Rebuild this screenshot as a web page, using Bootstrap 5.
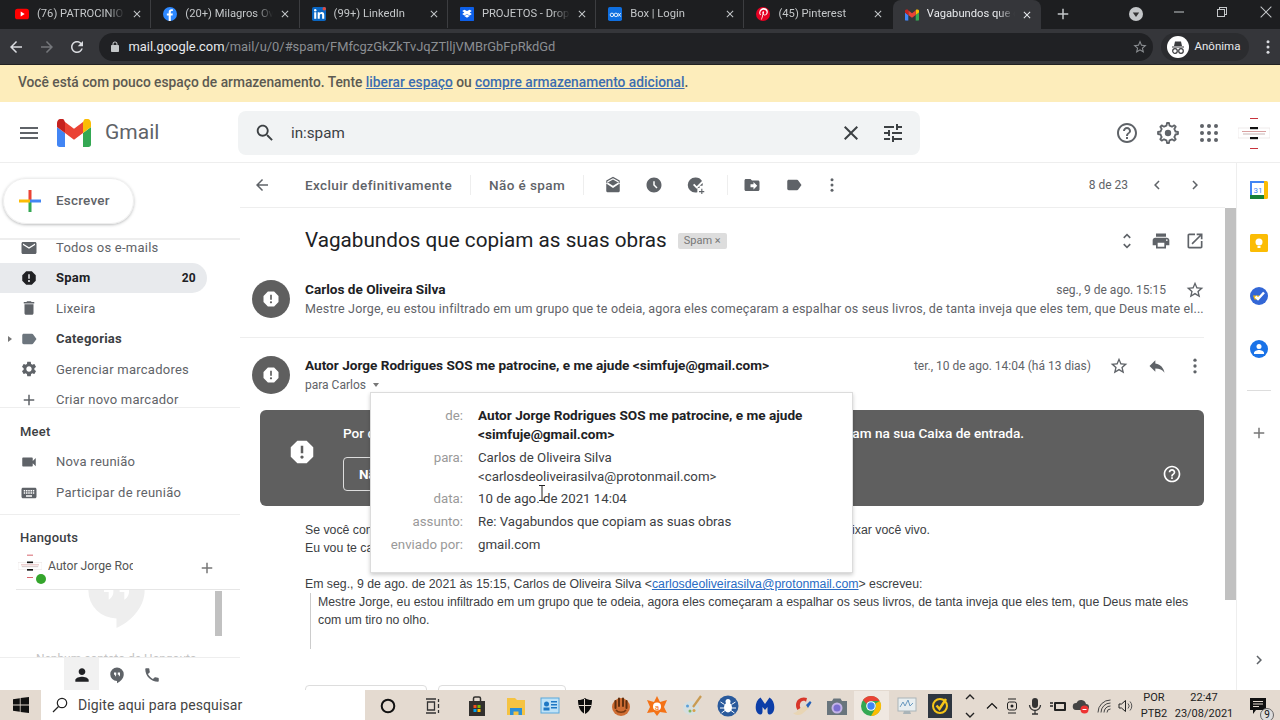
<!DOCTYPE html>
<html lang="pt-BR">
<head>
    <meta charset="UTF-8">
    <meta name="viewport" content="width=device-width, initial-scale=1.0">
    <title>Vagabundos que copiam as suas obras - Gmail</title>
    <link href="https://cdn.jsdelivr.net/npm/bootstrap@5.3.0/dist/css/bootstrap.min.css" rel="stylesheet">
    <style>
        html, body { height: 720px; overflow: hidden; }
        body { font-family: Roboto, "Liberation Sans", sans-serif; font-size: 13px; color: #5f6368; background: #fff; }
        svg { display: block; flex: none; }
        .ic { fill: currentColor; }
        .s12 { width: 12px; height: 12px; } .s14 { width: 14px; height: 14px; } .s16 { width: 16px; height: 16px; }
        .s18 { width: 18px; height: 18px; } .s20 { width: 20px; height: 20px; } .s22 { width: 22px; height: 22px; }
        .s24 { width: 24px; height: 24px; } .s30 { width: 30px; height: 30px; }

        /* chrome */
        .tabstrip { height: 29px; background: #1d1e20; color: #c4c7c9; font-size: 11.2px; padding-bottom: 1px; }
        .tabx { width: 148.3px; height: 28px; padding: 0 6px 0 12px; border-right: 1px solid #3c3d40; }
        .tabx:first-child { margin-left: 3px; }
        .tabx.no-sep { border-right-color: transparent; }
        .tabx.on { background: #35363a; color: #e8eaed; border-radius: 8px 8px 0 0; border: 0; height: 29px; margin-bottom: -1px; }
        .tab-fav { width: 14px; height: 14px; margin-right: 8px; }
        .tab-title { width: 88px; overflow: hidden; white-space: nowrap; mask-image: linear-gradient(90deg, #000 80%, transparent); }
        .tab-x { margin-left: 6px; color: #c4c7c9; }
        .tabx.on .tab-x { color: #e8eaed; }
        .new-tab { margin-left: 13px; }
        .win-min { margin-left: 30px; margin-top: -5px; }
        .win-max { margin-left: 31px; margin-top: -5px; }
        .win-cls { margin-left: 32px; margin-right: 8px; margin-top: -5px; }
        .urlbar { height: 36px; background: #35363a; color: #dadce0; border-bottom: 1px solid #222; padding: 4px 0 3px; }
        .nav-ic { width: 30.5px; } .nav-ic.first { margin-left: 1px; }
        .nav-dim { color: #75777b; }
        .omni { width: 1054px; margin-left: 6px; background: #202124; border-radius: 15px; padding: 0 5px 0 10px; font-size: 12.9px; color: #8b8e92; }
        .omni b { font-weight: 400; color: #e8eaed; }
        .omni-lock { margin-right: 8px; color: #c4c7c9; }
        .incog { width: 88px; margin-left: 8px; background: #2b2c2f; border-radius: 15px; padding-left: 6px; color: #e8eaed; font-size: 11.5px; gap: 6px; }
        .dots-end { margin-left: 10px; color: #dadce0; }

        /* banner + header */
        .low-space { height: 37px; background: #fdedbb; padding: 0 0 2px 18px; font-size: 13.75px; font-weight: 500; color: #5c5a52; }
        .low-space a { color: #3c6db0; }
        .gm-head { height: 61px; border-bottom: 1px solid #eee; padding-top: 2px; }
        .menu-btn { width: 57px; padding-left: 17px; }
        .gm-name { width: 147px; padding-left: 14px; font-size: 21px; color: #5f6368; }
        .gm-search { width: 682px; height: 44px; background: #f1f3f4; border-radius: 8px; padding: 0 15px 0 16px; font-size: 15.2px; color: #3c4043; }
        .gm-search .q { flex: 1; padding-left: 15px; }
        .search-x { margin-right: 18px; }
        .head-tools { margin-left: auto; gap: 17px; padding-right: 10px; }
        .head-tools .ic { width: 24px; height: 24px; }
        .acct { width: 32px; height: 32px; }

        /* sidebar */
        .gm-body { height: 527px; }
        .side { width: 240px; }
        .compose-wrap { height: 75px; padding: 15px 0 0 3px; }
        .compose-btn { width: 131px; height: 46px; border-radius: 23px; border: 1px solid #eee; box-shadow: 0 1px 3px rgba(60,64,67,.35); padding: 0 0 1px 14px; gap: 14px; font-size: 13.5px; font-weight: 500; letter-spacing: .2px; color: #5f6368; }
        .side-list { height: 170px; overflow: hidden; border-top: 2px solid #eee; border-bottom: 1px solid #eee; }
        .side-list-in { margin-top: -7.5px; }
        .side-row { height: 30.4px; width: 207px; padding-left: 20px; border-radius: 0 15px 15px 0; gap: 18px; letter-spacing: .25px; position: relative; }
        .side-row.on { background: #e8eaed; color: #202124; font-weight: 700; }
        .side-row.strong { color: #3c4043; font-weight: 700; }
        .row-count { margin-left: auto; padding-right: 11px; font-size: 12px; }
        .side-tri { position: absolute; left: 8px; top: 12px; border-left: 4px solid #777; border-top: 3.5px solid transparent; border-bottom: 3.5px solid transparent; }
        .side-title { height: 31px; padding-left: 20px; color: #3c4043; font-weight: 500; letter-spacing: .2px; }
        .meet-box { height: 107px; border-bottom: 1px solid #eee; padding-top: 8px; }
        .hang-head { height: 44px; padding-top: 7px; }
        .hang-contact { height: 31px; border-bottom: 1px solid #e6e6e6; margin-left: 16px; padding-left: 2px; font-size: 12.2px; position: relative; color: #555; }
        .hang-ava { margin-top: -5px; }
        .hang-name { width: 85px; height: 20px; line-height: 20px; overflow: hidden; white-space: nowrap; margin-left: 6px; margin-top: -3px; }
        .green-dot { position: absolute; left: 20px; top: 15px; width: 10px; height: 10px; border-radius: 50%; background: #34a52c; }
        .hang-plus { margin-left: 65px; color: #777; }
        .hang-empty { height: 67px; overflow: hidden; position: relative; color: #eee; text-align: center; font-size: 12px; }
        .hang-bubble { margin: -34px 0 0 78.5px; width: 75px; height: 75px; }
        .hang-none { position: absolute; left: 0; width: 232px; top: 60px; color: #c4c4c4; }
        .hang-thumb { position: absolute; left: 215px; top: 1px; width: 7px; height: 45px; background: #c1c1c1; }
        .hang-foot { height: 33px; border-top: 1px solid #eee; padding-left: 64px; color: #5f6368; }
        .hang-tab { width: 35px; height: 33px; }
        .hang-tab.on { background: #f1f1f1; color: #202124; }

        /* main column */
        .mainpane { width: 985px; }
        .toolbar { height: 45px; border-bottom: 1px solid #eee; position: relative; font-size: 13.5px; font-weight: 500; letter-spacing: .4px; }
        .tb-back { width: 65px; padding-left: 13px; }
        .tb-sep { width: 1px; height: 20px; background: #eee; }
        .tb-sep-two { margin-left: 10px; }
        .tb-txt { margin: 0 18px; white-space: nowrap; }
        .tb-first { margin-left: 0; }
        .tb-ico { width: 41.5px; }
        .tb-pages { margin-left: auto; padding-right: 21px; font-size: 12px; font-weight: 400; letter-spacing: 0; gap: 20px; }
        .scroll-area { height: 482px; position: relative; overflow: hidden; }
        .msg-pane { width: 985px; padding: 0 21px 0 12px; }
        .subj-row { height: 64px; padding: 1px 0 0 53px; }
        .subj-txt { font-size: 20.7px; color: #202124; }
        .spam-chip { margin-left: 11px; height: 16px; background: #ddd; border-radius: 2px; padding: 0 6px; font-size: 11px; color: #777; line-height: 16px; }
        .subj-tools { margin-left: auto; gap: 14px; margin-right: -1px; }
        .msg-row { height: 66px; border-bottom: 1px solid #eee; padding: 8px 0 0 12px; margin-left: -12px; }
        .avatar-mail { width: 38px; height: 38px; border-radius: 50%; background: #5f5f5f; color: #fff; margin-right: 15px; flex: none; }
        .mail-meta { flex: 1; min-width: 0; }
        .mail-from { color: #202124; font-weight: 700; font-size: 13.6px; line-height: 19px; }
        .mail-snip { font-size: 12.5px; line-height: 19px; margin-top: -1px; white-space: nowrap; letter-spacing: .165px; }
        .mail-date { font-size: 12px; line-height: 19px; }
        .date-one { gap: 19px; margin-right: -1px; }
        .top-line { display: flex; justify-content: space-between; }
        .msg-two { height: 72px; padding-top: 18px; }
        .para-line { font-size: 12px; line-height: 19px; }
        .para-tri { display: inline-block; margin-left: 4px; vertical-align: 2px; border-top: 4px solid #777; border-left: 3.5px solid transparent; border-right: 3.5px solid transparent; }
        .msg-tools { gap: 18px; margin: 0 -1px 0 18px; }
        .spam-warn { margin-left: 8px; height: 96px; background: #5f5f5f; border-radius: 6px; color: #fff; font-weight: 500; position: relative; padding: 14px 0 0 83px; font-size: 13.6px; }
        .warn-ico { position: absolute; left: 27px; top: 27px; }
        .warn-line { width: 681px; display: flex; justify-content: space-between; line-height: 19px; }
        .warn-btn { margin-top: 14px; width: 110px; height: 34px; border: 1px solid #ddd; border-radius: 4px; font-weight: 700; line-height: 32px; padding-left: 15px; }
        .warn-help { position: absolute; right: 22px; top: 54px; }
        .plain-mail { padding: 15px 0 0 53px; font-family: "Liberation Sans", Arial, sans-serif; font-size: 12.3px; line-height: 18px; color: #3c4043; }
        .line-split { width: 625px; display: flex; justify-content: space-between; }
        .plain-gap { height: 18px; }
        .plain-mail a { color: #2a6cc4; }
        .quote-box { margin-left: 5px; padding-left: 7px; border-left: 1px solid #ccc; height: 56px; width: 882px; }
        .reply-stubs { margin: 36px 0 0 53px; gap: 11px; }
        .reply-stub { height: 28px; border: 1px solid #ddd; border-radius: 4px; }
        .stub-a { width: 122px; } .stub-b { width: 128px; }

        /* popup on top of message */
        .mail-pop { position: absolute; left: 130px; top: 184px; width: 483px; height: 181px; background: #fff; border: 1px solid #dcdcdc; box-shadow: 0 2px 4px rgba(0,0,0,.2); padding: 13px 20px 0 0; display: grid; grid-template-columns: 92px 1fr; column-gap: 15px; row-gap: 3.7px; align-content: start; font-size: 13.25px; line-height: 19px; color: #3c4043; }
        .pop-lab { text-align: right; color: #999; }
        .pop-val { color: #3c4043; }
        .pop-val.bold { color: #202124; font-size: 13.6px; font-weight: 700; }
        .ibeam { position: absolute; left: 167px; top: 92px; width: 8px; height: 16px; }

        .v-scroll { width: 11px; }
        .toolbar-blank { height: 45px; }
        .v-thumb { height: 392px; background: #c1c1c1; }
        .rail { width: 44px; border-left: 1px solid #eee; position: relative; }
        .rail-top { height: 227px; padding-top: 18px; gap: 35px; }
        .rail-top svg { width: 18px; height: 18px; }
        .rail-line { width: 24px; height: 1px; background: #ddd; margin: 0 auto; }
        .rail-plus { margin-top: 33px; color: #777; }
        .rail-next { margin-top: 209px; color: #5f6368; }

        /* taskbar */
        .taskbar { height: 30px; background: #e4dad0; color: #111; }
        .win-btn { width: 41px; }
        .task-search { width: 324px; background: #fff; padding-left: 11px; gap: 10px; font-size: 14px; color: #444; letter-spacing: .1px; }
        .task-grid { flex: 1; display: grid; height: 30px; align-items: center; justify-items: center; grid-template-columns: 46.5px 43.5px 43px 36px 32.5px 36px 36px 36px 35.5px 36.5px 37px 36px 34px 35px 36px 31.5px 28px 16.5px 22.5px 23px 23px 23.5px 22.5px 21px 36px 64px 44px; }
        .task-cell { display: flex; align-items: center; justify-content: center; width: 100%; height: 30px; }
        .task-cell.open { background: #efe8e1; }
        .lang-box, .clock-box { font-size: 11px; line-height: 16px; text-align: center; color: #222; }
        .task-chev { gap: 6px; font-size: 0; }
        .notif-wrap { position: relative; }
        .notif-n { position: absolute; left: 11px; top: 11px; width: 14px; height: 14px; border-radius: 50%; background: #ddd; border: 1px solid #666; font-size: 10px; line-height: 12px; text-align: center; color: #111; }
    </style>
</head>
<body class="d-flex flex-column">

<svg class="d-none">
    <symbol id="i-menu" viewBox="0 0 24 24"><path d="M3 18h18v-2H3v2zm0-5h18v-2H3v2zm0-7v2h18V6H3z"/></symbol>
    <symbol id="i-search" viewBox="0 0 24 24"><path d="M15.5 14h-.79l-.28-.27C15.41 12.59 16 11.11 16 9.5 16 5.91 13.09 3 9.5 3S3 5.91 3 9.5 5.91 16 9.5 16c1.61 0 3.09-.59 4.23-1.57l.27.28v.79l5 4.99L20.49 19l-4.99-5zm-6 0C7.01 14 5 11.99 5 9.5S7.01 5 9.5 5 14 7.01 14 9.5 11.99 14 9.5 14z"/></symbol>
    <symbol id="i-close" viewBox="0 0 24 24"><path d="M19 6.41L17.59 5 12 10.59 6.41 5 5 6.41 10.59 12 5 17.59 6.41 19 12 13.41 17.59 19 19 17.59 13.41 12z"/></symbol>
    <symbol id="i-tune" viewBox="0 0 24 24"><path d="M3 17v2h6v-2H3zM3 5v2h10V5H3zm10 16v-2h8v-2h-8v-2h-2v6h2zM7 9v2H3v2h4v2h2V9H7zm14 4v-2H11v2h10zm-6-4h2V7h4V5h-4V3h-2v6z"/></symbol>
    <symbol id="i-help" viewBox="0 0 24 24"><path d="M11 18h2v-2h-2v2zm1-16C6.48 2 2 6.48 2 12s4.48 10 10 10 10-4.48 10-10S17.52 2 12 2zm0 18c-4.41 0-8-3.59-8-8s3.59-8 8-8 8 3.59 8 8-3.59 8-8 8zm0-14c-2.21 0-4 1.79-4 4h2c0-1.1.9-2 2-2s2 .9 2 2c0 2-3 1.75-3 5h2c0-2.25 3-2.5 3-5 0-2.21-1.79-4-4-4z"/></symbol>
    <symbol id="i-gear" viewBox="0 0 24 24"><path d="M19.14 12.94c.04-.3.06-.61.06-.94 0-.32-.02-.64-.07-.94l2.03-1.58c.18-.14.23-.41.12-.61l-1.92-3.32c-.12-.22-.37-.29-.59-.22l-2.39.96c-.5-.38-1.03-.7-1.62-.94l-.36-2.54c-.04-.24-.24-.41-.48-.41h-3.84c-.24 0-.43.17-.47.41l-.36 2.54c-.59.24-1.13.57-1.62.94l-2.39-.96c-.22-.08-.47 0-.59.22L2.74 8.87c-.12.21-.08.47.12.61l2.03 1.58c-.05.3-.09.63-.09.94s.02.64.07.94l-2.03 1.58c-.18.14-.23.41-.12.61l1.92 3.32c.12.22.37.29.59.22l2.39-.96c.5.38 1.03.7 1.62.94l.36 2.54c.05.24.24.41.48.41h3.84c.24 0 .44-.17.47-.41l.36-2.54c.59-.24 1.13-.56 1.62-.94l2.39.96c.22.08.47 0 .59-.22l1.92-3.32c.12-.22.07-.47-.12-.61l-2.01-1.58zM12 15.6c-1.98 0-3.6-1.62-3.6-3.6s1.62-3.6 3.6-3.6 3.6 1.62 3.6 3.6-1.62 3.6-3.6 3.6z"/></symbol>
    <symbol id="i-gear-o" viewBox="0 0 24 24"><path d="M13 2h-2l-.5 2.600a8 8 0 00-2.500 1.100L5.700 4.400 4.300 5.800 5.700 8a8 8 0 00-1.100 2.500L2 11v2l2.600.5a8 8 0 001.100 2.500l-1.400 2.300 1.400 1.400L8 18.300a8 8 0 002.500 1.100L11 22h2l.5-2.600a8 8 0 002.500-1.100l2.300 1.400 1.400-1.400-1.400-2.300a8 8 0 001.100-2.500L22 13v-2l-2.600-.5a8 8 0 00-1.100-2.500l1.400-2.300-1.400-1.400L16 5.700a8 8 0 00-2.500-1.100z" fill="none" stroke="currentColor" stroke-width="1.800" stroke-linejoin="round"/><circle cx="12" cy="12" r="3.200"/></symbol>
    <symbol id="i-apps" viewBox="0 0 24 24"><circle cx="5" cy="5" r="2"/><circle cx="12" cy="5" r="2"/><circle cx="19" cy="5" r="2"/><circle cx="5" cy="12" r="2"/><circle cx="12" cy="12" r="2"/><circle cx="19" cy="12" r="2"/><circle cx="5" cy="19" r="2"/><circle cx="12" cy="19" r="2"/><circle cx="19" cy="19" r="2"/></symbol>
    <symbol id="i-back" viewBox="0 0 24 24"><path d="M20 11H7.830l5.590-5.590L12 4l-8 8 8 8 1.410-1.410L7.830 13H20v-2z"/></symbol>
    <symbol id="i-fwd" viewBox="0 0 24 24"><path d="M4 13h12.170l-5.590 5.590L12 20l8-8-8-8-1.410 1.410L16.170 11H4v2z"/></symbol>
    <symbol id="i-reload" viewBox="0 0 24 24"><path d="M17.65 6.35C16.2 4.9 14.21 4 12 4c-4.42 0-7.99 3.58-7.99 8s3.57 8 7.99 8c3.73 0 6.84-2.55 7.73-6h-2.08c-.82 2.33-3.04 4-5.65 4-3.31 0-6-2.69-6-6s2.69-6 6-6c1.66 0 3.14.69 4.22 1.78L13 11h7V4l-2.35 2.35z"/></symbol>
    <symbol id="i-star" viewBox="0 0 24 24"><path d="M22 9.24l-7.19-.62L12 2 9.19 8.63 2 9.24l5.46 4.73L5.820 21 12 17.27 18.18 21l-1.63-7.03L22 9.24zM12 15.4l-3.76 2.27 1-4.28-3.32-2.88 4.38-.38L12 6.100l1.71 4.04 4.38.38-3.32 2.88 1 4.28L12 15.4z"/></symbol>
    <symbol id="i-lock" viewBox="0 0 24 24"><path d="M18 8h-1V6c0-2.76-2.24-5-5-5S7 3.24 7 6v2H6c-1.100 0-2 .9-2 2v10c0 1.100.9 2 2 2h12c1.100 0 2-.9 2-2V10c0-1.100-.9-2-2-2zM9 6c0-1.660 1.340-3 3-3s3 1.340 3 3v2H9V6z"/></symbol>
    <symbol id="i-mail" viewBox="0 0 24 24"><path d="M20 4H4c-1.100 0-2 .9-2 2v12c0 1.100.9 2 2 2h16c1.100 0 2-.9 2-2V6c0-1.100-.9-2-2-2zm0 4l-8 5-8-5V6l8 5 8-5v2z"/></symbol>
    <symbol id="i-report" viewBox="0 0 24 24"><path d="M15.730 3H8.270L3 8.270v7.460L8.270 21h7.460L21 15.730V8.270L15.730 3zM12 17.300c-.72 0-1.300-.58-1.300-1.300 0-.72.58-1.300 1.300-1.300.72 0 1.300.58 1.300 1.300 0 .72-.58 1.300-1.300 1.300zm1-4.300h-2V7h2v6z"/></symbol>
    <symbol id="i-trash" viewBox="0 0 24 24"><path d="M6 19c0 1.100.9 2 2 2h8c1.100 0 2-.9 2-2V7H6v12zM19 4h-3.500l-1-1h-5l-1 1H5v2h14V4z"/></symbol>
    <symbol id="i-label" viewBox="0 0 24 24"><path d="M17.630 5.840C17.270 5.330 16.670 5 16 5L5 5.010C3.900 5.010 3 5.900 3 7v10c0 1.100.9 1.990 2 1.990L16 19c.67 0 1.270-.33 1.630-.84L22 12l-4.370-6.160z"/></symbol>
    <symbol id="i-add" viewBox="0 0 24 24"><path d="M19 13h-6v6h-2v-6H5v-2h6V5h2v6h6v2z"/></symbol>
    <symbol id="i-video" viewBox="0 0 24 24"><path d="M17 10.500V7c0-.55-.45-1-1-1H4c-.55 0-1 .45-1 1v10c0 .55.45 1 1 1h12c.55 0 1-.45 1-1v-3.500l4 4v-11l-4 4z"/></symbol>
    <symbol id="i-keys" viewBox="0 0 24 24"><path d="M20 5H4c-1.100 0-1.990.9-1.990 2L2 17c0 1.100.9 2 2 2h16c1.100 0 2-.9 2-2V7c0-1.100-.9-2-2-2zm-9 3h2v2h-2V8zm0 3h2v2h-2v-2zM8 8h2v2H8V8zm0 3h2v2H8v-2zm-1 2H5v-2h2v2zm0-3H5V8h2v2zm9 7H8v-2h8v2zm0-4h-2v-2h2v2zm0-3h-2V8h2v2zm3 3h-2v-2h2v2zm0-3h-2V8h2v2z"/></symbol>
    <symbol id="i-person" viewBox="0 0 24 24"><path d="M12 12c2.210 0 4-1.790 4-4s-1.790-4-4-4-4 1.790-4 4 1.790 4 4 4zm0 2c-2.670 0-8 1.340-8 4v2h16v-2c0-2.660-5.330-4-8-4z"/></symbol>
    <symbol id="i-phone" viewBox="0 0 24 24"><path d="M6.620 10.790c1.440 2.830 3.760 5.140 6.590 6.590l2.200-2.200c.27-.27.67-.36 1.020-.24 1.120.37 2.330.57 3.570.57.55 0 1 .45 1 1V20c0 .55-.45 1-1 1-9.390 0-17-7.610-17-17 0-.55.45-1 1-1h3.500c.55 0 1 .45 1 1 0 1.250.2 2.450.57 3.570.11.35.03.74-.25 1.020l-2.200 2.200z"/></symbol>
    <symbol id="i-bubble" viewBox="0 0 24 24"><path fill-rule="evenodd" d="M12 2a9 9 0 00-9 9 9 9 0 009 9v3c4.500-2 9-6.500 9-12a9 9 0 00-9-9zM8 8.500h3v3c0 1.200-.8 2-1.500 2.500v-2.500H8zm5 0h3v3c0 1.200-.8 2-1.500 2.500v-2.500H13z"/></symbol>
    <symbol id="i-clock" viewBox="0 0 24 24"><path d="M11.990 2C6.470 2 2 6.480 2 12s4.470 10 9.990 10C17.520 22 22 17.520 22 12S17.520 2 11.990 2zm3.300 14.710L11 12.410V7h2v4.590l3.710 3.710-1.420 1.410z"/></symbol>
    <symbol id="i-print" viewBox="0 0 24 24"><path d="M19 8H5c-1.660 0-3 1.340-3 3v6h4v4h12v-4h4v-6c0-1.660-1.340-3-3-3zm-3 11H8v-5h8v5zm3-7c-.55 0-1-.45-1-1s.45-1 1-1 1 .45 1 1-.45 1-1 1zm-1-9H6v4h12V3z"/></symbol>
    <symbol id="i-open" viewBox="0 0 24 24"><path d="M19 19H5V5h7V3H5c-1.110 0-2 .9-2 2v14c0 1.100.89 2 2 2h14c1.100 0 2-.9 2-2v-7h-2v7zM14 3v2h3.590l-9.830 9.830 1.410 1.410L19 6.410V10h2V3h-7z"/></symbol>
    <symbol id="i-unfold" viewBox="0 0 24 24"><path d="M12 5.830L15.170 9l1.410-1.410L12 3 7.410 7.590 8.830 9 12 5.830zm0 12.340L8.830 15l-1.410 1.410L12 21l4.590-4.590L15.170 15 12 18.170z"/></symbol>
    <symbol id="i-reply" viewBox="0 0 24 24"><path d="M10 9V5l-7 7 7 7v-4.100c5 0 8.500 1.600 11 5.100-1-5-4-10-11-11z"/></symbol>
    <symbol id="i-more" viewBox="0 0 24 24"><circle cx="12" cy="5" r="2"/><circle cx="12" cy="12" r="2"/><circle cx="12" cy="19" r="2"/></symbol>
    <symbol id="i-prev" viewBox="0 0 24 24"><path d="M15.410 7.410L14 6l-6 6 6 6 1.410-1.410L10.830 12z"/></symbol>
    <symbol id="i-next" viewBox="0 0 24 24"><path d="M10 6L8.590 7.410 13.170 12l-4.580 4.590L10 18l6-6z"/></symbol>
    <symbol id="i-drafts" viewBox="0 0 24 24"><path fill-rule="evenodd" d="M12 1 3 6v3l1.500 1V7l7.500-4 7.500 4v3L21 9V6zM3 10v10a1.500 1.500 0 001.500 1.500h15A1.500 1.500 0 0021 20V10l-9 6zM5 8.500l7 4.500 7-4.500-7-3.800z"/></symbol>
    <symbol id="i-task" viewBox="0 0 24 24"><path d="M11 2a10 10 0 100 20c1 0 1.900-.1 2.800-.4V19h-.01c0-.1.010-.2.010-.3V16h3v-3h3.900c.2-.6.3-1.300.3-2l-.2-1.800-7.800 7.800-5-5 1.700-1.700 3.300 3.300 7-7A10 10 0 0011 2zm8 15v3h-3v1.500h3V24h1.500v-2.500H23V20h-2.500v-3H19z"/></symbol>
    <symbol id="i-move" viewBox="0 0 24 24"><path d="M20 6h-8l-2-2H4c-1.100 0-1.990.9-1.990 2L2 18c0 1.100.9 2 2 2h16c1.100 0 2-.9 2-2V8c0-1.100-.9-2-2-2zm-6 12v-3h-4v-4h4V8l5 5-5 5z"/></symbol>

    <symbol id="logo-account" viewBox="0 0 32 32"><rect x="0" y="11" width="32" height="10" fill="#fff" stroke="#e4dcdc" stroke-width=".6"/><rect x="12" y="1" width="8" height="1" fill="#c8323c"/><rect x="12" y="10" width="8" height="2.200" fill="#111"/><rect x="12" y="20" width="8" height="2.200" fill="#111"/><rect x="4" y="14" width="24" height="1" fill="#d9a0a0"/><rect x="5" y="16.500" width="22" height="1" fill="#c9b6b6"/><rect x="12" y="31" width="8" height="1" fill="#c8323c"/></symbol>
    <symbol id="logo-m" viewBox="0 0 34 28"><path fill="#4285f4" d="M0 25.500C0 27 1 28 2.500 28H8V14L0 8z"/><path fill="#34a853" d="M26 28h5.500c1.500 0 2.500-1 2.500-2.500V8l-8 6z"/><path fill="#fbbc04" d="M26 3v11l8-6V4c0-3.500-4-5.500-6.800-3.400z"/><path fill="#ea4335" d="M8 14V3l9 6.700L26 3v11l-9 6.700z"/><path fill="#c5221f" d="M0 4v4l8 6V3L6.800.6C4-1.500 0 .5 0 4z"/></symbol>
</svg>

<div class="tabstrip d-flex align-items-center">
    <div class="tabx d-flex align-items-center">
        <svg class="tab-fav" viewBox="0 0 16 16"><rect y="2" width="16" height="12" rx="3" fill="#f00"/><path d="M6.500 5.200v5.600L11 8z" fill="#fff"/></svg>
        <span class="tab-title">(76) PATROCINIO DO</span>
        <svg class="ic s12 tab-x"><use href="#i-close"/></svg>
    </div>
    <div class="tabx d-flex align-items-center">
        <svg class="tab-fav" viewBox="0 0 16 16"><circle cx="8" cy="8" r="8" fill="#2d88ff"/><path d="M8.900 16V9.700h2l.35-2.400H8.900V5.900c0-.7.3-1.200 1.300-1.200h1.100V2.600C11 2.500 10.300 2.500 9.700 2.500 7.800 2.500 6.500 3.600 6.500 5.700v1.600H4.400v2.400h2.100V16z" fill="#fff"/></svg>
        <span class="tab-title">(20+) Milagros Ovando</span>
        <svg class="ic s12 tab-x"><use href="#i-close"/></svg>
    </div>
    <div class="tabx d-flex align-items-center">
        <svg class="tab-fav" viewBox="0 0 16 16"><rect width="16" height="16" rx="2" fill="#0a66c2"/><rect x="2.500" y="6" width="2.400" height="7.500" fill="#fff"/><circle cx="3.700" cy="3.800" r="1.400" fill="#fff"/><path d="M6.500 6h2.300v1.100C9.300 6.300 10.100 5.800 11.200 5.800c2 0 2.800 1.300 2.800 3.300v4.400h-2.400V9.500c0-1-.4-1.600-1.200-1.600-.9 0-1.500.6-1.500 1.700v3.900H6.500z" fill="#fff"/><circle cx="14" cy="2" r="2" fill="#e34b3f"/></svg>
        <span class="tab-title">(99+) LinkedIn</span>
        <svg class="ic s12 tab-x"><use href="#i-close"/></svg>
    </div>
    <div class="tabx d-flex align-items-center">
        <svg class="tab-fav" viewBox="0 0 16 16"><rect width="16" height="16" rx="1" fill="#0d5fe8"/><path d="M5 3 2.500 4.700 5 6.300 2.500 8 5 9.600 8 7.900 11 9.600 13.500 8 11 6.300 13.500 4.700 11 3 8 4.700zM8 8.500 5 10.200 8 12.200 11 10.200z" fill="#fff"/></svg>
        <span class="tab-title">PROJETOS - Dropbox</span>
        <svg class="ic s12 tab-x"><use href="#i-close"/></svg>
    </div>
    <div class="tabx d-flex align-items-center">
        <svg class="tab-fav" viewBox="0 0 16 16"><rect width="16" height="16" rx="2" fill="#0f6fe0"/><circle cx="4.500" cy="9" r="2" fill="none" stroke="#fff"/><circle cx="9" cy="9" r="2" fill="none" stroke="#fff"/><path d="M11.500 7l3 4m0-4l-3 4" stroke="#fff"/></svg>
        <span class="tab-title">Box | Login</span>
        <svg class="ic s12 tab-x"><use href="#i-close"/></svg>
    </div>
    <div class="tabx no-sep d-flex align-items-center">
        <svg class="tab-fav" viewBox="0 0 16 16"><circle cx="8" cy="8" r="8" fill="#e60023"/><path d="M6.200 15c-.2-.9 0-2 .3-3l1-4.100c-.7-1.600.1-3.100 1-3 .9.100.8 1.300.4 2.600-.3 1.300 1.800 2.100 2.800-.1 1-2.300-.3-4.300-2.900-4.300-3 0-4.600 2.900-3.600 5 .3.500.6.600.3 1.300-.9-.1-2-1.300-1.800-3.200C4 2.900 6.200 1.100 8.800 1.100c3 0 5 2.200 4.700 5-.3 2.500-2.400 4.100-4.200 3.300-.4-.2-.8-.5-1-.9l-.7 2.900c-.3 1.100-.7 2.400-1.400 3.600z" fill="#fff"/></svg>
        <span class="tab-title">(45) Pinterest</span>
        <svg class="ic s12 tab-x"><use href="#i-close"/></svg>
    </div>
    <div class="tabx on d-flex align-items-center">
        <svg class="tab-fav" viewBox="0 0 34 28"><use href="#logo-m"/></svg>
        <span class="tab-title">Vagabundos que copiam</span>
        <svg class="ic s12 tab-x"><use href="#i-close"/></svg>
    </div>
    <svg class="ic s18 new-tab" viewBox="0 0 24 24"><use href="#i-add"/></svg>
    <svg class="s14 ms-auto" viewBox="0 0 14 14"><circle cx="7" cy="7" r="7" fill="#c4c7c9"/><path d="M3.800 5.500h6.400L7 10z" fill="#333"/></svg>
    <svg class="ic s12 win-min" viewBox="0 0 12 12"><rect x="1" y="5.500" width="10" height="1"/></svg>
    <svg class="ic s12 win-max" viewBox="0 0 12 12"><path d="M3 1h8v8H9v2H1V3h2zm1 1v1h5v5h1V2zM2 4v6h6V4z"/></svg>
    <svg class="ic s12 win-cls" viewBox="0 0 12 12"><path d="M1 .300 6 5.300 11 .300l.7.7-5 5 5 5-.7.7-5-5-5 5-.7-.7 5-5-5-5z"/></svg>
</div>

<div class="urlbar d-flex align-items-stretch">
    <div class="nav-ic first d-flex align-items-center justify-content-center"><svg class="ic s18"><use href="#i-back"/></svg></div>
    <div class="nav-ic nav-dim d-flex align-items-center justify-content-center"><svg class="ic s18"><use href="#i-fwd"/></svg></div>
    <div class="nav-ic d-flex align-items-center justify-content-center"><svg class="ic s18"><use href="#i-reload"/></svg></div>
    <div class="omni d-flex align-items-center">
        <svg class="ic s12 omni-lock"><use href="#i-lock"/></svg>
        <span><b>mail.google.com</b>/mail/u/0/#spam/FMfcgzGkZkTvJqZTlljVMBrGbFpRkdGd</span>
        <svg class="ic s16 ms-auto"><use href="#i-star"/></svg>
    </div>
    <div class="incog d-flex align-items-center">
        <svg class="s22" viewBox="0 0 22 22"><circle cx="11" cy="11" r="11" fill="#fff"/><path d="M5 10.500h12v1H5zM7 10l1-4.500h6L15 10z" fill="#3a3b3e"/><circle cx="8" cy="15" r="2.300" fill="none" stroke="#3a3b3e" stroke-width="1.200"/><circle cx="14" cy="15" r="2.300" fill="none" stroke="#3a3b3e" stroke-width="1.200"/></svg>
        <span>Anônima</span>
    </div>
    <div class="dots-end d-flex align-items-center"><svg class="ic s18"><use href="#i-more"/></svg></div>
</div>

<div class="low-space d-flex align-items-center">
    <span>Você está com pouco espaço de armazenamento. Tente <a href="#">liberar espaço</a> ou <a href="#">compre armazenamento adicional</a>.</span>
</div>

<header class="gm-head d-flex align-items-center">
    <div class="menu-btn"><svg class="ic s24"><use href="#i-menu"/></svg></div>
    <svg width="34" height="28" viewBox="0 0 34 28"><use href="#logo-m"/></svg>
    <div class="gm-name">Gmail</div>
    <div class="gm-search d-flex align-items-center">
        <svg class="ic s22"><use href="#i-search"/></svg>
        <div class="q">in:spam</div>
        <svg class="ic s24 search-x"><use href="#i-close"/></svg>
        <svg class="ic s24"><use href="#i-tune"/></svg>
    </div>
    <div class="head-tools d-flex align-items-center">
        <svg class="ic"><use href="#i-help"/></svg>
        <svg class="ic"><use href="#i-gear-o"/></svg>
        <svg class="ic"><use href="#i-apps"/></svg>
        <svg class="acct"><use href="#logo-account"/></svg>
    </div>
</header>

<div class="gm-body d-flex">
    <aside class="side d-flex flex-column">
        <div class="compose-wrap">
            <div class="compose-btn d-flex align-items-center">
                <svg class="s24" viewBox="0 0 24 24"><rect x="10.500" y="1" width="3" height="11" fill="#ea4335"/><rect x="10.500" y="12" width="3" height="11" fill="#34a853"/><rect x="1" y="10.500" width="11" height="3" fill="#fbbc04"/><rect x="12" y="10.500" width="11" height="3" fill="#4285f4"/></svg>
                <span>Escrever</span>
            </div>
        </div>
        <div class="side-list">
            <div class="side-list-in">
                <div class="side-row d-flex align-items-center"><svg class="ic s18"><use href="#i-mail"/></svg>Todos os e-mails</div>
                <div class="side-row on d-flex align-items-center"><svg class="ic s18"><use href="#i-report"/></svg>Spam<span class="row-count">20</span></div>
                <div class="side-row d-flex align-items-center"><svg class="ic s18"><use href="#i-trash"/></svg>Lixeira</div>
                <div class="side-row strong d-flex align-items-center"><i class="side-tri"></i><svg class="ic s18 text-secondary"><use href="#i-label"/></svg>Categorias</div>
                <div class="side-row d-flex align-items-center"><svg class="ic s18"><use href="#i-gear"/></svg>Gerenciar marcadores</div>
                <div class="side-row d-flex align-items-center"><svg class="ic s18"><use href="#i-add"/></svg>Criar novo marcador</div>
            </div>
        </div>
        <div class="meet-box">
            <div class="side-title d-flex align-items-center">Meet</div>
            <div class="side-row d-flex align-items-center"><svg class="ic s18"><use href="#i-video"/></svg>Nova reunião</div>
            <div class="side-row d-flex align-items-center"><svg class="ic s18"><use href="#i-keys"/></svg>Participar de reunião</div>
        </div>
        <div class="hang-head"><div class="side-title d-flex align-items-center">Hangouts</div></div>
        <div class="hang-contact d-flex align-items-start">
            <svg class="s24 hang-ava"><use href="#logo-account"/></svg>
            <span class="green-dot"></span>
            <span class="hang-name">Autor Jorge Rodrigues</span>
            <svg class="ic s18 hang-plus"><use href="#i-add"/></svg>
        </div>
        <div class="hang-empty">
            <svg class="ic hang-bubble"><use href="#i-bubble"/></svg>
            <div class="hang-none">Nenhum contato de Hangouts</div>
            <span class="hang-thumb"></span>
        </div>
        <div class="hang-foot d-flex">
            <div class="hang-tab on d-flex align-items-center justify-content-center"><svg class="ic s20"><use href="#i-person"/></svg></div>
            <div class="hang-tab d-flex align-items-center justify-content-center"><svg class="ic s18"><use href="#i-bubble"/></svg></div>
            <div class="hang-tab d-flex align-items-center justify-content-center"><svg class="ic s18"><use href="#i-phone"/></svg></div>
        </div>
    </aside>

    <main class="mainpane d-flex flex-column">
        <div class="toolbar d-flex align-items-center">
            <div class="tb-back"><svg class="ic s18"><use href="#i-back"/></svg></div>
            <span class="tb-txt tb-first">Excluir definitivamente</span>
            <span class="tb-sep"></span>
            <span class="tb-txt">Não é spam</span>
            <span class="tb-sep"></span>
            <div class="tb-ico d-flex justify-content-center ms-2"><svg class="ic s18"><use href="#i-drafts"/></svg></div>
            <div class="tb-ico d-flex justify-content-center"><svg class="ic s18"><use href="#i-clock"/></svg></div>
            <div class="tb-ico d-flex justify-content-center"><svg class="ic s18"><use href="#i-task"/></svg></div>
            <span class="tb-sep tb-sep-two"></span>
            <div class="tb-ico d-flex justify-content-center ms-1"><svg class="ic s18"><use href="#i-move"/></svg></div>
            <div class="tb-ico d-flex justify-content-center"><svg class="ic s18"><use href="#i-label"/></svg></div>
            <div class="d-flex justify-content-center ms-2"><svg class="ic s18"><use href="#i-more"/></svg></div>
            <div class="tb-pages d-flex align-items-center">
                <span>8 de 23</span>
                <svg class="ic s18"><use href="#i-prev"/></svg>
                <svg class="ic s18"><use href="#i-next"/></svg>
            </div>
        </div>

        <div class="scroll-area d-flex">
            <div class="msg-pane">
                <div class="subj-row d-flex align-items-center">
                    <span class="subj-txt">Vagabundos que copiam as suas obras</span>
                    <span class="spam-chip">Spam ×</span>
                    <div class="subj-tools d-flex align-items-center">
                        <svg class="ic s20"><use href="#i-unfold"/></svg>
                        <svg class="ic s20"><use href="#i-print"/></svg>
                        <svg class="ic s20"><use href="#i-open"/></svg>
                    </div>
                </div>

                <div class="msg-row d-flex">
                    <div class="avatar-mail d-flex align-items-center justify-content-center"><svg class="ic s20"><use href="#i-report"/></svg></div>
                    <div class="mail-meta">
                        <div class="top-line">
                            <span class="mail-from">Carlos de Oliveira Silva</span>
                            <span class="d-flex align-items-center date-one mail-date">seg., 9 de ago. 15:15 <svg class="ic s20"><use href="#i-star"/></svg></span>
                        </div>
                        <div class="mail-snip">Mestre Jorge, eu estou infiltrado em um grupo que te odeia, agora eles começaram a espalhar os seus livros, de tanta inveja que eles tem, que Deus mate el...</div>
                    </div>
                </div>

                <div class="msg-two d-flex">
                    <div class="avatar-mail d-flex align-items-center justify-content-center"><svg class="ic s20"><use href="#i-report"/></svg></div>
                    <div class="mail-meta">
                        <div class="top-line">
                            <span class="mail-from">Autor Jorge Rodrigues SOS me patrocine, e me ajude &lt;simfuje@gmail.com&gt;</span>
                            <span class="d-flex align-items-center mail-date">ter., 10 de ago. 14:04 (há 13 dias)
                                <span class="msg-tools d-flex align-items-center">
                                    <svg class="ic s20"><use href="#i-star"/></svg>
                                    <svg class="ic s20"><use href="#i-reply"/></svg>
                                    <svg class="ic s20"><use href="#i-more"/></svg>
                                </span>
                            </span>
                        </div>
                        <div class="para-line">para Carlos <i class="para-tri"></i></div>
                    </div>
                </div>

                <div class="spam-warn">
                    <svg class="ic warn-ico s30"><use href="#i-report"/></svg>
                    <div class="warn-line"><span>Por q</span><span>am na sua Caixa de entrada.</span></div>
                    <div class="warn-btn">Não é spam</div>
                    <svg class="ic warn-help s20"><use href="#i-help"/></svg>
                </div>

                <div class="plain-mail">
                    <div class="line-split"><span>Se você continuar</span><span>deixar você vivo.</span></div>
                    <div>Eu vou te ca</div>
                    <div class="plain-gap"></div>
                    <div>Em seg., 9 de ago. de 2021 às 15:15, Carlos de Oliveira Silva &lt;<a href="#">carlosdeoliveirasilva@protonmail.com</a>&gt; escreveu:</div>
                    <div class="quote-box">Mestre Jorge, eu estou infiltrado em um grupo que te odeia, agora eles começaram a espalhar os seus livros, de tanta inveja que eles tem, que Deus mate eles com um tiro no olho.</div>
                </div>
                <div class="reply-stubs d-flex">
                    <div class="reply-stub stub-a"></div>
                    <div class="reply-stub stub-b"></div>
                </div>
            </div>

            <div class="mail-pop">
                <div class="pop-lab">de:</div>
                <div class="pop-val bold">Autor Jorge Rodrigues SOS me patrocine, e me ajude &lt;simfuje@gmail.com&gt;</div>
                <div class="pop-lab">para:</div>
                <div class="pop-val">Carlos de Oliveira Silva<br>&lt;carlosdeoliveirasilva@protonmail.com&gt;</div>
                <div class="pop-lab">data:</div>
                <div class="pop-val">10 de ago. de 2021 14:04</div>
                <div class="pop-lab">assunto:</div>
                <div class="pop-val">Re: Vagabundos que copiam as suas obras</div>
                <div class="pop-lab">enviado por:</div>
                <div class="pop-val">gmail.com</div>
                <svg class="ibeam" viewBox="0 0 8 16"><path d="M1 .500h6M1 15.500h6M4 .500v15" stroke="#222" fill="none"/></svg>
            </div>
        </div>
    </main>

    <div class="v-scroll d-flex flex-column">
        <div class="toolbar-blank"></div>
        <div class="v-thumb"></div>
    </div>

    <div class="rail flex-grow-1">
        <div class="rail-top d-flex flex-column align-items-center">
            <svg viewBox="0 0 18 18"><rect width="18" height="18" rx="1.500" fill="#fbbc04"/><rect width="14" height="14" fill="#4285f4"/><rect x="2" y="2" width="12" height="12" fill="#fff"/><rect y="14" width="14" height="4" fill="#188038"/><text x="8" y="11.500" font-size="8" text-anchor="middle" fill="#4285f4" font-family="Roboto, sans-serif">31</text></svg>
            <svg viewBox="0 0 18 18"><rect width="18" height="18" rx="1.500" fill="#fbbc04"/><circle cx="9" cy="8" r="3.500" fill="#fff"/><rect x="7.500" y="12" width="3" height="2" fill="#fff"/></svg>
            <svg viewBox="0 0 18 18"><circle cx="9" cy="9" r="9" fill="#3367d6"/><path d="M3 8.500h6v4H4.500z" fill="#fbbc04"/><path d="M5.500 9.500 8 12 14 5.500" fill="none" stroke="#fff" stroke-width="2.500"/></svg>
            <svg viewBox="0 0 18 18"><circle cx="9" cy="9" r="9" fill="#1a73e8"/><circle cx="9" cy="6.500" r="2.500" fill="#fff"/><path d="M4 13c0-2 3-3 5-3s5 1 5 3v1H4z" fill="#fff"/></svg>
        </div>
        <div class="rail-line"></div>
        <div class="rail-plus d-flex justify-content-center"><svg class="ic s18"><use href="#i-add"/></svg></div>
        <div class="rail-next d-flex justify-content-center"><svg class="ic s18"><use href="#i-next"/></svg></div>
    </div>
</div>

<footer class="taskbar d-flex">
    <div class="win-btn d-flex align-items-center justify-content-center">
        <svg class="s16" viewBox="0 0 16 16"><path d="M0 2.200 6.800 1.200V7.600H0zM7.600 1.100 16 0V7.600H7.600zM0 8.400H6.800V14.800L0 13.800zM7.600 8.400H16V16L7.600 14.900z" fill="#111"/></svg>
    </div>
    <div class="task-search d-flex align-items-center">
        <svg class="s16" viewBox="0 0 16 16"><circle cx="10" cy="6" r="4.700" fill="none" stroke="#222" stroke-width="1.200"/><path d="M6.500 9.500 1 15" stroke="#222" stroke-width="1.300"/></svg>
        <span>Digite aqui para pesquisar</span>
    </div>
    <div class="task-grid">
        <div class="task-cell"><svg class="s16" viewBox="0 0 16 16"><circle cx="8" cy="8" r="6.300" fill="none" stroke="#111" stroke-width="2"/></svg></div>
        <div class="task-cell"><svg class="s16" viewBox="0 0 16 16"><path d="M1 1h10M1 15h10M2.500 4h7v8h-7zM13.500 1v3M13.500 6v4M13.500 12v3" fill="none" stroke="#333" stroke-width="1.300"/></svg></div>
        <div class="task-cell"><svg class="s22" viewBox="0 0 22 22"><path d="M3 6h16v15H3z" fill="#32302e"/><path d="M7.500 6V3.500A1.500 1.500 0 019 2h4a1.500 1.500 0 011.500 1.500V6" fill="none" stroke="#32302e" stroke-width="1.500"/><rect x="7.500" y="10" width="3" height="3" fill="#f25022"/><rect x="11.500" y="10" width="3" height="3" fill="#7fba00"/><rect x="7.500" y="14" width="3" height="3" fill="#00a4ef"/><rect x="11.500" y="14" width="3" height="3" fill="#ffb900"/></svg></div>
        <div class="task-cell"><svg class="s22" viewBox="0 0 22 22"><path d="M2 3h8l2 2h8v15H2z" fill="#f5c342"/><path d="M5 20v-7h12v7h-3.500v-3.500h-5V20z" fill="#2c8fd6"/></svg></div>
        <div class="task-cell"><svg class="s20" viewBox="0 0 20 20"><rect x="1" y="2" width="18" height="15" fill="#bfe2f7" stroke="#58a7dc"/><circle cx="6.500" cy="8" r="2.500" fill="#1f78c4"/><rect x="11" y="5" width="6" height="1.500" fill="#1f78c4"/><rect x="11" y="8" width="6" height="1.500" fill="#1f78c4"/><rect x="11" y="11" width="6" height="1.500" fill="#1f78c4"/><rect x="3.500" y="11.500" width="6" height="3" fill="#1f78c4"/></svg></div>
        <div class="task-cell"><svg class="s18" viewBox="0 0 18 18"><path d="M9 1c2 1.500 4 2 7 2 0 6.500-2 11.500-7 14-5-2.500-7-7.500-7-14 3 0 5-.5 7-2z" fill="#0d0d0d"/><path d="M8.500 2v15M2.500 8.500h13" stroke="#e4dad0"/></svg></div>
        <div class="task-cell"><svg class="s22" viewBox="0 0 22 22"><circle cx="11" cy="12" r="9" fill="#cf6d33"/><path d="M5.500 13V6M9 11V3.500M13 11V3.500M16.500 13V6" stroke="#5f2e0e" stroke-width="2" stroke-linecap="round"/><path d="M6 15c2 3 8 3 10 0" fill="none" stroke="#7a3a12" stroke-width="1.500"/></svg></div>
        <div class="task-cell"><svg class="s22" viewBox="0 0 22 22"><path d="M11 1l3 6 7-2-3 7 3 6-7-1-3 4-3-4-7 1 3-6-3-7 7 2z" fill="#f47216"/><circle cx="11" cy="11.500" r="4" fill="#fff"/><text x="11" y="14.500" text-anchor="middle" font-size="8" fill="#f47216" font-family="Roboto, sans-serif">a</text></svg></div>
        <div class="task-cell"><svg class="s22" viewBox="0 0 22 22"><ellipse cx="10" cy="13" rx="8" ry="7" fill="#d6dfe0"/><circle cx="6.500" cy="11" r="1.500" fill="#5aa0d8"/><circle cx="9" cy="16" r="1.500" fill="#7fb663"/><circle cx="13" cy="15.500" r="1.500" fill="#d9a04b"/><path d="M12 12 20 1" stroke="#c99b52" stroke-width="2.200"/></svg></div>
        <div class="task-cell"><svg class="s22" viewBox="0 0 22 22"><circle cx="11" cy="11" r="10.500" fill="#2a5a9c"/><ellipse cx="11" cy="12.500" rx="4" ry="5" fill="#fff"/><circle cx="11" cy="6.500" r="2.500" fill="#fff"/><path d="M3.500 7l4 2.500M18.500 7l-4 2.500M3 13h4.500M19 13h-4.500M4.500 18l3.500-2.500M17.500 18 14 15.500" stroke="#fff"/></svg></div>
        <div class="task-cell"><svg class="s22" viewBox="0 0 22 22"><path d="M6.500 2.500C2.500 5 1 10 2 15c.5 2.500 2.500 4.500 4.500 4.500 1.500 0 2-1.500 2-3V12l2.500 3 2.500-3v4.500c0 1.500.5 3 2 3 2 0 4-2 4.500-4.500 1-5-.5-10-4.500-12.500L11 9z" fill="#0d3ea8"/></svg></div>
        <div class="task-cell"><svg class="s22" viewBox="0 0 22 22"><path d="M16 3c-5-2-11 1-11 7 0 2 .5 3.500 1.500 5l3-2c-1-2-1-6 2-7 1.500-.5 3 0 3.500 1z" fill="#d8362a"/><path d="M7 15l8-5 3 3-7 6c-3 2-7 1-9-1 2 0 4-1 5-3z" fill="#e8d5b4"/><path d="M15 10l4-4 1.500 1.500-3.500 5.500z" fill="#2460b8"/></svg></div>
        <div class="task-cell"><svg class="s22" viewBox="0 0 22 22"><path d="M1 6h5l1.500-2.500h7L16 6h5v14H1z" fill="#69757d"/><circle cx="11" cy="13" r="5.500" fill="#c3b3e8"/><circle cx="11" cy="13" r="3.500" fill="#7c6fd0"/></svg></div>
        <div class="task-cell open"><svg class="s22" viewBox="0 0 22 22"><circle cx="11" cy="11" r="10" fill="#34a853"/><path d="M11 1a10 10 0 018.700 5H11a5 5 0 00-4.500 2.800L3 5a10 10 0 018-4z" fill="#ea4335"/><path d="M19.700 6A10 10 0 0111 21l4.300-7.500A5 5 0 0015.500 8.500z" fill="#fbbc04"/><circle cx="11" cy="11" r="4.800" fill="#fff"/><circle cx="11" cy="11" r="3.700" fill="#4285f4"/></svg></div>
        <div class="task-cell"><svg class="s22" viewBox="0 0 22 22"><rect x="2" y="3" width="18" height="13" fill="#e8eef0" stroke="#aab4b8"/><path d="M4 12l3-5 2 4 3-6 2 6 3-3" fill="none" stroke="#6a9ac0"/><path d="M7 19h8l-1-3H8z" fill="#aab4b8"/></svg></div>
        <div class="task-cell"><svg class="s24" viewBox="0 0 24 24"><rect width="24" height="24" fill="#2e3640"/><circle cx="12" cy="12" r="7" fill="none" stroke="#f5c518" stroke-width="2"/><path d="M8.500 11.500 11.500 15 18 5" fill="none" stroke="#f5c518" stroke-width="2.500"/></svg></div>
        <div class="task-chev d-flex flex-column align-items-center">
            <svg class="s12" viewBox="0 0 12 12"><path d="M2 8 6 4l4 4" fill="none" stroke="#222" stroke-width="1.400"/></svg>
            <svg class="s12" viewBox="0 0 12 12"><path d="M2 4 6 8l4-4" fill="none" stroke="#222" stroke-width="1.400"/></svg>
        </div>
        <div class="task-cell"><svg class="s12" viewBox="0 0 12 12"><path d="M1 8.500 6 3.500l5 5" fill="none" stroke="#111" stroke-width="1.200"/></svg></div>
        <div class="task-cell"><svg class="s16" viewBox="0 0 16 16"><path d="M4 1h8M4 15h8" stroke="#222"/><rect x="3.500" y="4" width="9" height="8" rx="2" fill="none" stroke="#222"/><circle cx="8" cy="8" r="1.500" fill="#222"/></svg></div>
        <div class="task-cell"><svg class="s18" viewBox="0 0 18 18"><rect x="6" y="1" width="6" height="10" rx="3" fill="#333"/><path d="M3.500 8a5.500 5.500 0 0011 0M9 13.500V17M6 17h6" fill="none" stroke="#333" stroke-width="1.300"/></svg></div>
        <div class="task-cell"><svg class="s18" viewBox="0 0 18 18"><rect x="5" y="5" width="12" height="9" rx="1" fill="#222"/><rect x="7" y="7" width="8" height="5" fill="#e4dad0"/><path d="M1 6h3M1 9h3" stroke="#222" stroke-width="1.500"/></svg></div>
        <div class="task-cell"><svg class="s18" viewBox="0 0 18 18"><path d="M4 13a3.500 3.500 0 01.500-7 5 5 0 019.500 1 3 3 0 010 6z" fill="#444"/><circle cx="12.500" cy="12.500" r="4" fill="#e33"/><rect x="10.500" y="12" width="4" height="1" fill="#fff"/></svg></div>
        <div class="task-cell"><svg class="s16" viewBox="0 0 16 16"><path d="M2 14.500a12.500 12.500 0 0112.500-12.500M5 14.500A9.500 9.500 0 0114.500 5M8 14.500A6.500 6.500 0 0114.500 8M11 14.500A3.500 3.500 0 0114.500 11" fill="none" stroke="#444"/></svg></div>
        <div class="task-cell"><svg class="s16" viewBox="0 0 16 16"><path d="M1 6h2.500L7.500 2.500v11L3.500 10H1z" fill="none" stroke="#222"/><path d="M10 5.500a3.500 3.500 0 010 5M12 3.500a6.500 6.500 0 010 9" fill="none" stroke="#555"/></svg></div>
        <div class="lang-box">POR<br>PTB2</div>
        <div class="clock-box">22:47<br>23/08/2021</div>
        <div class="notif-wrap"><svg class="s18" viewBox="0 0 18 18"><path d="M1 1h16v12H7l-3 4v-4H1z" fill="#111"/><path d="M4 4.500h10M4 7h10M4 9.500h6" stroke="#e4dad0"/></svg><span class="notif-n">9</span></div>
    </div>
</footer>

<script src="https://cdn.jsdelivr.net/npm/bootstrap@5.3.0/dist/js/bootstrap.bundle.min.js"></script>
</body>
</html>
